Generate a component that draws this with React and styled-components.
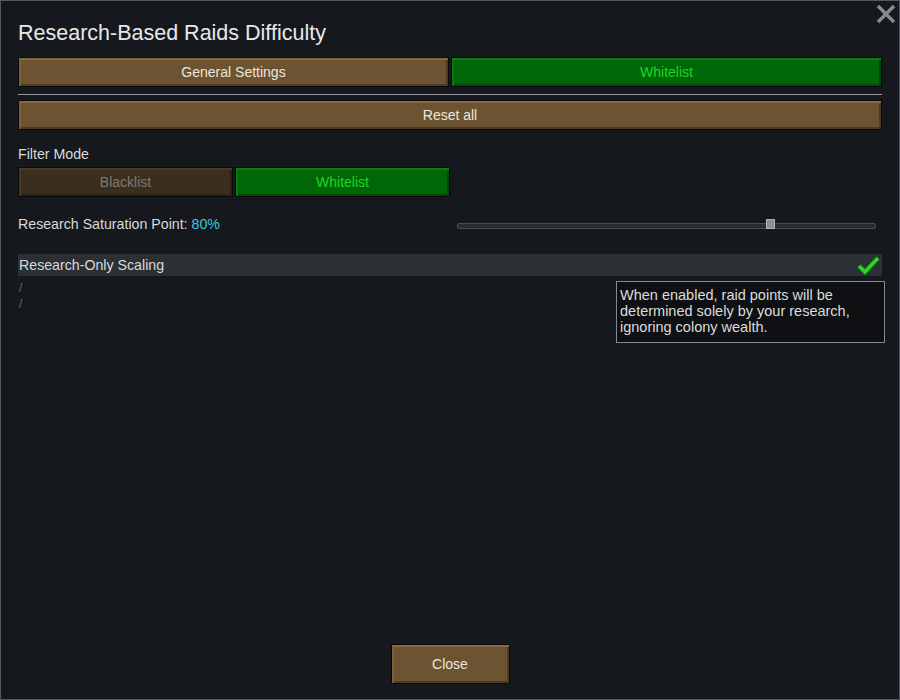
import React from 'react'
import styled, { createGlobalStyle } from 'styled-components'

const GlobalStyle = createGlobalStyle`
  html, body { margin: 0; padding: 0; background: #15181d; }
  body { font-family: "Liberation Sans", Arial, sans-serif; }
`

const Window = styled.div`
  position: relative;
  box-sizing: border-box;
  width: 900px;
  height: 700px;
  border: 1px solid #55595f;
  background: #15181d;
  padding: 20px 17px 15px;
  display: flex;
  flex-direction: column;
  color: #dcdcdc;
`

const CloseX = styled.svg`
  position: absolute;
  top: 3px;
  right: 3px;
`

const Title = styled.h1`
  margin: 0;
  font-size: 21.5px;
  line-height: 24px;
  font-weight: normal;
  color: #e8e8e8;
`

const Pair = styled.div`
  display: grid;
  grid-template-columns: 1fr 1fr;
  gap: 2px;
  width: ${p => p.width || '100%'};
  margin-top: ${p => p.mt || 0}px;
`

const Btn = styled.button`
  box-sizing: border-box;
  height: ${p => p.h || 30}px;
  width: ${p => p.w || 'auto'};
  border: 1px solid #0a0a0a;
  font-family: "Liberation Sans", Arial, sans-serif;
  font-size: 14px;
  padding: 0;
  cursor: pointer;
  ${p => p.variant === 'green' ? `
    background: #006708;
    color: #1fd81f;
    box-shadow: inset 0 2px 0 #0b7d12, inset 2px 0 0 #07760e, inset -2px -2px 0 #00490a;
  ` : p.variant === 'dim' ? `
    background: #3b2e1d;
    color: #7b7a78;
    box-shadow: inset 0 2px 0 #4a3a25, inset 2px 0 0 #46371f, inset -2px -2px 0 #2a2015;
  ` : `
    background: #6c5332;
    color: #ece6da;
    box-shadow: inset 0 2px 0 #876840, inset 2px 0 0 #7d6039, inset -2px -2px 0 #4c3a22;
  `}
`

const Separator = styled.div`
  height: 1px;
  background: #94969a;
  margin: 7px 0 5px;
`

const Label = styled.div`
  font-size: 14.2px;
  line-height: 18px;
  color: #dadada;
  margin-top: ${p => p.mt || 0}px;
`

const Value = styled.span`
  color: #3cc9d8;
`

const SliderRow = styled.div`
  display: grid;
  grid-template-columns: 1fr 1fr;
  gap: 2px;
  align-items: center;
  margin-top: 18px;
`

const Track = styled.div`
  position: relative;
  margin: 0 6px 0 6px;
  height: 4px;
  border-radius: 2px;
  background: #2a2c2e;
  border: 1px solid #4a4c4e;
  top: 2px;
`

const Thumb = styled.div`
  position: absolute;
  top: -5px;
  width: 9px;
  height: 10px;
  margin-left: -5px;
  background: #8e8f91;
  border: 1px solid #b0b1b3;
  box-sizing: border-box;
`

const CheckRow = styled.div`
  display: flex;
  align-items: center;
  justify-content: space-between;
  height: 22px;
  margin-top: 21px;
  background: #2c2f34;
  font-size: 14.2px;
  color: #dadada;
  padding-left: 1px;
`

const Slash = styled.div`
  font-size: 12px;
  line-height: 16px;
  color: #666a70;
  padding-left: 1px;
`

const Body = styled.div`
  position: relative;
  flex: 1;
  padding-top: 4px;
`

const Tooltip = styled.div`
  position: absolute;
  top: 5px;
  right: -3px;
  box-sizing: border-box;
  width: 269px;
  height: 62px;
  background: #0e1013;
  border: 1px solid #858a90;
  padding: 5px 3px;
  font-size: 14.5px;
  line-height: 16px;
  color: #dcdcdc;
`

const Footer = styled.div`
  display: flex;
  justify-content: center;
`

export default function App() {
  return (
    <>
      <GlobalStyle />
      <Window>
        <CloseX width="20" height="20" viewBox="0 0 20 20">
          <path d="M2 2 L18 18 M18 2 L2 18" stroke="#8a8b8d" strokeWidth="3.4" />
        </CloseX>
        <Title>Research-Based Raids Difficulty</Title>
        <Pair mt={12}>
          <Btn>General Settings</Btn>
          <Btn variant="green">Whitelist</Btn>
        </Pair>
        <Separator />
        <Btn h={30}>Reset all</Btn>
        <Label mt={15}>Filter Mode</Label>
        <Pair mt={4} width="432px">
          <Btn variant="dim">Blacklist</Btn>
          <Btn variant="green">Whitelist</Btn>
        </Pair>
        <SliderRow>
          <Label>Research Saturation Point: <Value>80%</Value></Label>
          <Track>
            <Thumb style={{ left: '75%' }} />
          </Track>
        </SliderRow>
        <CheckRow>
          <span>Research-Only Scaling</span>
          <svg width="26" height="22" viewBox="0 0 26 22">
            <path d="M3 12 L9 18 L22 4" fill="none" stroke="#0b5e0b" strokeWidth="6" strokeLinejoin="miter" />
            <path d="M3 12 L9 18 L22 4" fill="none" stroke="#2ed42e" strokeWidth="3.6" strokeLinejoin="miter" />
          </svg>
        </CheckRow>
        <Body>
          <Slash>/</Slash>
          <Slash>/</Slash>
          <Tooltip>
            When enabled, raid points will be determined solely by your research, ignoring colony wealth.
          </Tooltip>
        </Body>
        <Footer>
          <Btn w="119px" h={40}>Close</Btn>
        </Footer>
      </Window>
    </>
  )
}
